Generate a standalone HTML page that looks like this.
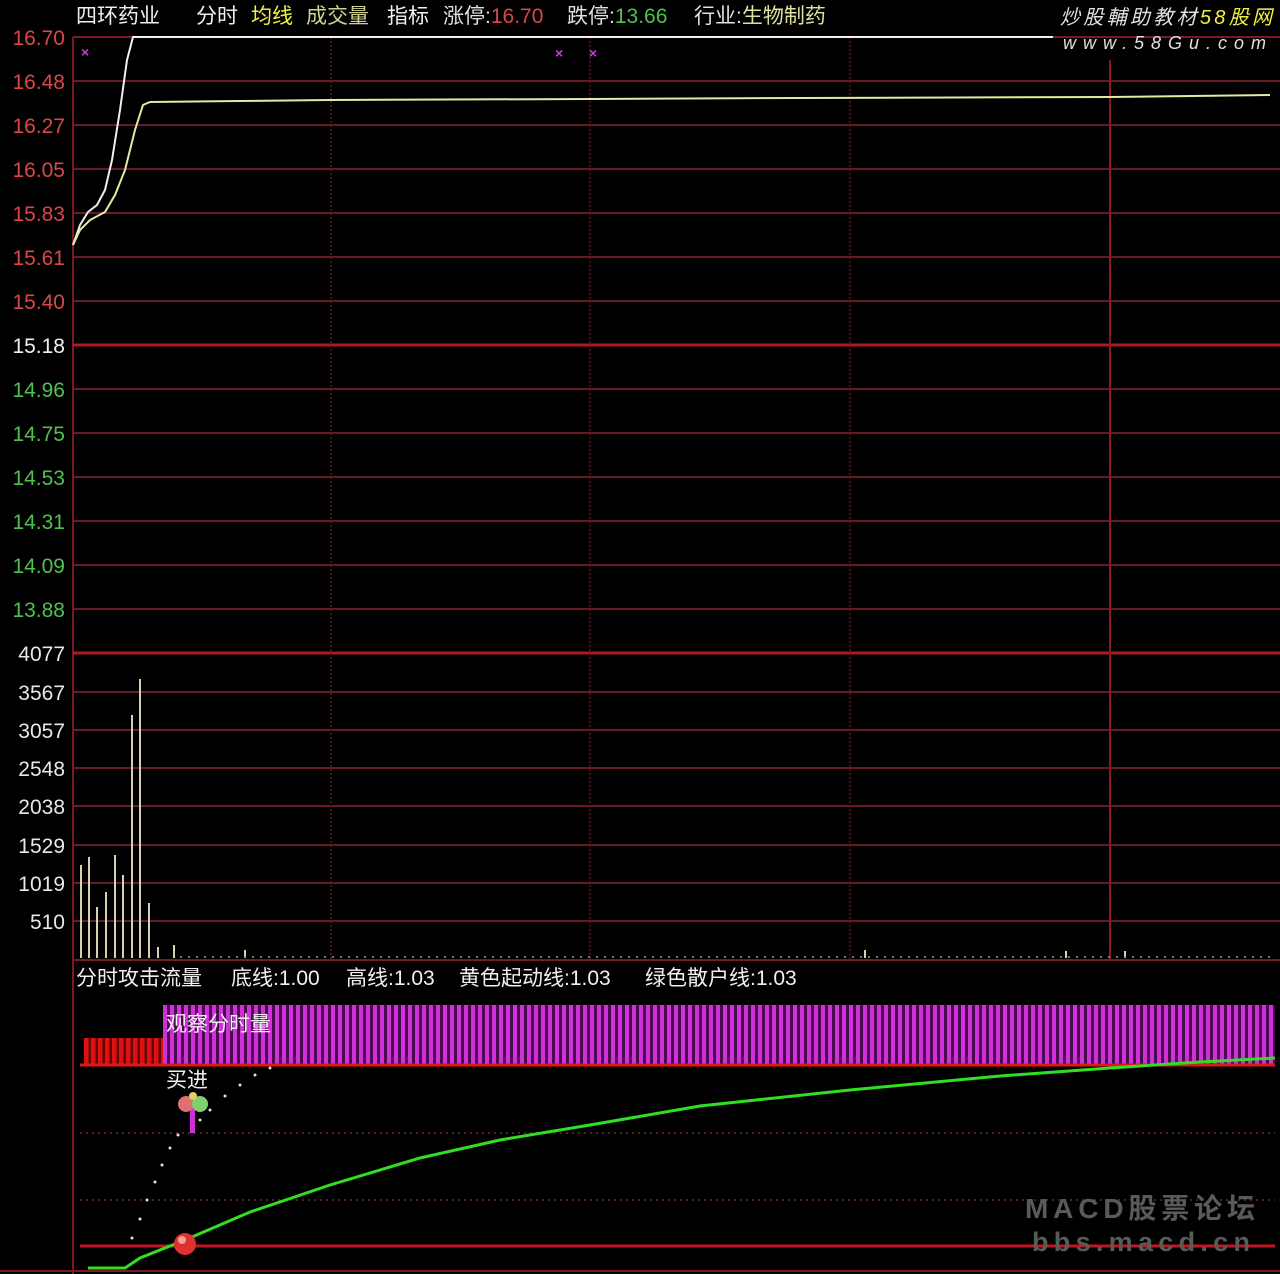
<!DOCTYPE html>
<html><head><meta charset="utf-8"><style>
html,body{margin:0;padding:0;background:#000;width:1280px;height:1274px;overflow:hidden}
svg{display:block}
text{font-family:"Liberation Sans","Noto Sans CJK SC",sans-serif}
</style></head><body>
<svg width="1280" height="1274" viewBox="0 0 1280 1274" xmlns="http://www.w3.org/2000/svg">
<defs>
<pattern id="mb" x="163" y="0" width="7" height="10" patternUnits="userSpaceOnUse">
<rect x="0" y="0" width="4" height="10" fill="#d030d8"/><rect x="4" y="0" width="3" height="10" fill="#4a0a50"/>
</pattern>
<pattern id="rb" x="84" y="0" width="7" height="10" patternUnits="userSpaceOnUse">
<rect x="0" y="0" width="4.5" height="10" fill="#e01010"/><rect x="4.5" y="0" width="2.5" height="10" fill="#600606"/>
</pattern>
</defs>
<rect width="1280" height="1274" fill="#000"/>
<g stroke="#7a1a22" stroke-width="2" fill="none">
<line x1="73" y1="37" x2="73" y2="1274"/>
<line x1="73" y1="37" x2="1280" y2="37"/>
</g>
<g stroke="#651a24" stroke-width="2">
<line x1="73" y1="81" x2="1280" y2="81"/><line x1="73" y1="125" x2="1280" y2="125"/>
<line x1="73" y1="169" x2="1280" y2="169"/><line x1="73" y1="213" x2="1280" y2="213"/>
<line x1="73" y1="257" x2="1280" y2="257"/><line x1="73" y1="301" x2="1280" y2="301"/>
<line x1="73" y1="389" x2="1280" y2="389"/><line x1="73" y1="433" x2="1280" y2="433"/>
<line x1="73" y1="477" x2="1280" y2="477"/><line x1="73" y1="521" x2="1280" y2="521"/>
<line x1="73" y1="565" x2="1280" y2="565"/><line x1="73" y1="609" x2="1280" y2="609"/>
<line x1="73" y1="692" x2="1280" y2="692"/><line x1="73" y1="730" x2="1280" y2="730"/>
<line x1="73" y1="768" x2="1280" y2="768"/><line x1="73" y1="806" x2="1280" y2="806"/>
<line x1="73" y1="845" x2="1280" y2="845"/><line x1="73" y1="883" x2="1280" y2="883"/>
<line x1="73" y1="921" x2="1280" y2="921"/>
</g>
<g stroke="#b01a22" stroke-width="3">
<line x1="73" y1="345" x2="1280" y2="345"/><line x1="73" y1="653" x2="1280" y2="653"/>
</g>
<line x1="73" y1="960" x2="1280" y2="960" stroke="#7a1a22" stroke-width="2"/>
<g stroke="#5a1a22" stroke-width="1.5" stroke-dasharray="2 2">
<line x1="331" y1="37" x2="331" y2="960"/><line x1="590" y1="37" x2="590" y2="960"/>
<line x1="850" y1="37" x2="850" y2="960"/>
</g>
<line x1="1110" y1="60" x2="1110" y2="960" stroke="#8a1a22" stroke-width="2"/>
<polyline fill="none" stroke="#f0f0f0" stroke-width="2" points="73,245 80,225 88,212 97,205 105,190 112,160 120,110 127,60 133,37 1053,37"/>
<polyline fill="none" stroke="#e8e8a0" stroke-width="2" points="73,245 80,230 90,220 105,212 115,195 125,170 135,130 143,105 150,102 240,101 330,100 590,99 800,98 1110,97 1270,95"/>
<g fill="#c040d0" font-size="14" font-weight="bold"><text x="81" y="57">×</text><text x="555" y="58">×</text><text x="589" y="58">×</text></g>
<g stroke="#d8d0b0" stroke-width="2">
<line x1="81" y1="958" x2="81" y2="865"/><line x1="89" y1="958" x2="89" y2="857"/>
<line x1="97" y1="958" x2="97" y2="907"/><line x1="106" y1="958" x2="106" y2="892"/>
<line x1="115" y1="958" x2="115" y2="855"/><line x1="123" y1="958" x2="123" y2="875"/>
<line x1="132" y1="958" x2="132" y2="715"/><line x1="140" y1="958" x2="140" y2="679"/>
<line x1="149" y1="958" x2="149" y2="903"/><line x1="158" y1="958" x2="158" y2="947"/>
<line x1="174" y1="958" x2="174" y2="945"/><line x1="245" y1="958" x2="245" y2="950"/>
<line x1="865" y1="958" x2="865" y2="950"/><line x1="1066" y1="958" x2="1066" y2="951"/><line x1="1125" y1="958" x2="1125" y2="951"/>
</g>
<line x1="180" y1="957" x2="1270" y2="957" stroke="#a09a80" stroke-width="1.5" stroke-dasharray="2 6"/>
<g font-size="21" text-anchor="end">
<g fill="#d84848"><text x="65" y="45">16.70</text><text x="65" y="89">16.48</text><text x="65" y="133">16.27</text><text x="65" y="177">16.05</text><text x="65" y="221">15.83</text><text x="65" y="265">15.61</text><text x="65" y="309">15.40</text></g>
<text x="65" y="353" fill="#f0f0f0">15.18</text>
<g fill="#50c050"><text x="65" y="397">14.96</text><text x="65" y="441">14.75</text><text x="65" y="485">14.53</text><text x="65" y="529">14.31</text><text x="65" y="573">14.09</text><text x="65" y="617">13.88</text></g>
<g fill="#e8e8e8"><text x="65" y="661">4077</text><text x="65" y="700">3567</text><text x="65" y="738">3057</text><text x="65" y="776">2548</text><text x="65" y="814">2038</text><text x="65" y="853">1529</text><text x="65" y="891">1019</text><text x="65" y="929">510</text></g>
</g>
<g font-size="21">
<text x="76" y="23" fill="#f0f0f0">四环药业</text>
<text x="196" y="23" fill="#f0f0f0">分时</text>
<text x="251" y="23" fill="#f0f040">均线</text>
<text x="306" y="23" fill="#d0d090">成交量</text>
<text x="387" y="23" fill="#f0f0f0">指标</text>
<text x="443" y="23" fill="#e0e0e0">涨停:<tspan fill="#d84848">16.70</tspan></text>
<text x="567" y="23" fill="#e0e0e0">跌停:<tspan fill="#50c050">13.66</tspan></text>
<text x="694" y="23" fill="#e0e0e0">行业:<tspan fill="#e0e0a0">生物制药</tspan></text>
</g>
<text x="1060" y="24" font-size="20" font-style="italic" fill="#e0e0e0" textLength="212">炒股輔助教材<tspan fill="#f0f040">58股网</tspan></text>
<text x="1063" y="49" font-size="18" font-style="italic" fill="#e0e0e0" letter-spacing="7">www.58Gu.com</text>
<g font-size="21" fill="#f0f0f0">
<text x="76" y="985">分时攻击流量</text>
<text x="231" y="985">底线:1.00</text>
<text x="346" y="985">高线:1.03</text>
<text x="459" y="985">黄色起动线:1.03</text>
<text x="645" y="985">绿色散户线:1.03</text>
</g>
<rect x="163" y="1005" width="1112" height="60" fill="url(#mb)"/>
<rect x="84" y="1038" width="79" height="27" fill="url(#rb)"/>
<line x1="80" y1="1065" x2="1275" y2="1065" stroke="#e01818" stroke-width="3"/>
<text x="166" y="1031" font-size="21" fill="#f0f0f0">观察分时量</text>
<text x="166" y="1087" font-size="21" fill="#f0f0f0">买进</text>
<g stroke="#6a2a30" stroke-width="1.5" stroke-dasharray="2 4">
<line x1="80" y1="1133" x2="1275" y2="1133"/><line x1="80" y1="1200" x2="1275" y2="1200"/>
</g>
<line x1="80" y1="1246" x2="1275" y2="1246" stroke="#c01820" stroke-width="3"/>
<line x1="0" y1="1271" x2="1280" y2="1271" stroke="#7a1a22" stroke-width="2"/>
<g fill="#e0e0e0"><circle cx="132" cy="1238" r="1.5"/><circle cx="140" cy="1219" r="1.5"/><circle cx="147" cy="1200" r="1.5"/><circle cx="155" cy="1182" r="1.5"/><circle cx="162" cy="1165" r="1.5"/><circle cx="170" cy="1148" r="1.5"/><circle cx="178" cy="1135" r="1.5"/><circle cx="200" cy="1120" r="1.5"/><circle cx="210" cy="1110" r="1.5"/><circle cx="225" cy="1096" r="1.5"/><circle cx="240" cy="1085" r="1.5"/><circle cx="255" cy="1075" r="1.5"/><circle cx="270" cy="1068" r="1.5"/></g>
<rect x="190" y="1105" width="5" height="28" fill="#d030d8"/>
<circle cx="186" cy="1104" r="8" fill="#e07070"/><circle cx="200" cy="1104" r="8" fill="#80d070"/><circle cx="193" cy="1096" r="4" fill="#e0d060"/>
<polyline fill="none" stroke="#30e020" stroke-width="3" points="88,1268 125,1268 140,1258 185,1240 250,1212 330,1185 420,1158 500,1140 590,1125 700,1106 850,1090 1000,1076 1110,1068 1200,1062 1275,1058"/>
<circle cx="185" cy="1244" r="11" fill="#e03030"/><circle cx="182" cy="1240" r="4" fill="#f0a0a0"/>
<text x="1025" y="1218" font-size="28" font-weight="bold" fill="#5a5a5a" textLength="230">MACD股票论坛</text>
<text x="1032" y="1251" font-size="27" font-weight="bold" fill="#5a5a5a" textLength="218">bbs.macd.cn</text>
</svg>
</body></html>
